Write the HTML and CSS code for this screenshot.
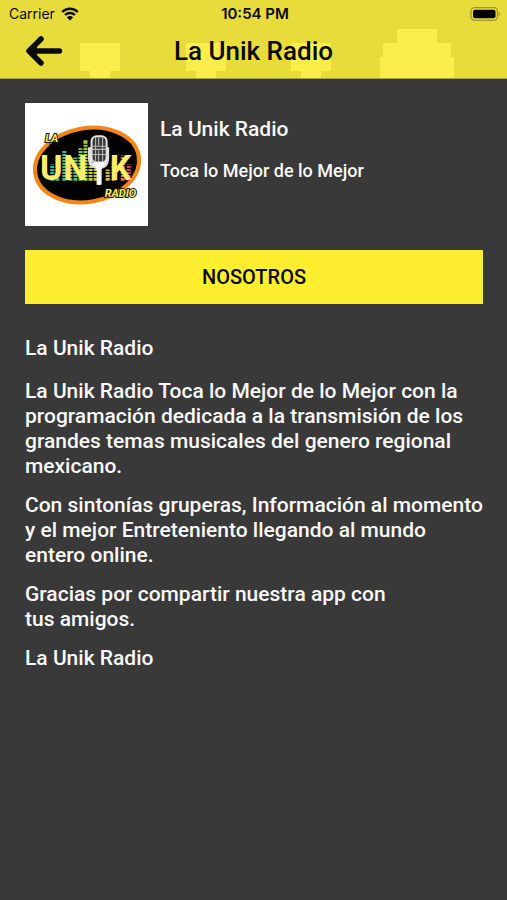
FILE: index.html
```html
<!DOCTYPE html>
<html lang="es">
<head>
  <meta charset="UTF-8">
  <meta name="viewport" content="width=device-width, initial-scale=1.0">
  <title>La Unik Radio</title>
  <link rel="stylesheet" href="styles.css">
</head>
<body>

  <header class="header">
    <!-- Pixel shapes behind the bar -->
    <svg class="header-shapes" width="507" height="79" viewBox="0 0 507 79" fill="#fbed4c" aria-hidden="true">
      <path d="M80 43h40v28H110v8H90v-8H80z"/>
      <path d="M186 43h40v28h-10v8h-20v-8h-10z"/>
      <path d="M291 43h40v28h-10v8h-20v-8h-10z"/>
      <path d="M397 29h40v14h14v14h3v22h-74V57h3V43h14z"/>
    </svg>

    <div class="status-bar">
      <div class="carrier">
        <span>Carrier</span>
        <svg width="18" height="14" viewBox="0 0 18 14" aria-hidden="true">
          <path d="M1.2 5a11 11 0 0 1 15.600 0M4 8a7.200 7.200 0 0 1 10 0" fill="none" stroke="#0c0c04" stroke-width="2.300"/>
          <path d="M9 13.500L5.900 10.400a4.400 4.400 0 0 1 6.200 0z" fill="#0c0c04"/>
        </svg>
      </div>
      <time class="clock">10:54 PM</time>
      <svg class="battery" width="31" height="14" viewBox="0 0 31 14" aria-hidden="true">
        <rect x="1" y="0.700" width="26.500" height="12.600" rx="3.800" fill="none" stroke="#a1982b" stroke-width="1.300"/>
        <rect x="3" y="2.700" width="22.500" height="8.600" rx="2" fill="#000"/>
        <path d="M28.700 4.800q2.600 2.200 0 4.400z" fill="#a1982b"/>
      </svg>
    </div>

    <div class="nav-bar">
      <button class="back-button" aria-label="Volver">
        <svg width="39" height="32" viewBox="0 0 39 32" fill="none" stroke="#0a0a00" stroke-width="5.500" stroke-linecap="round" stroke-linejoin="round">
          <path d="M6 16H35.500M17 4L5 16L17 28"/>
          <path d="M4 16l8-7v14z" fill="#0a0a00" stroke-width="2"/>
        </svg>
      </button>
      <h1>La Unik Radio</h1>
    </div>
  </header>

  <main class="content">
    <section class="station">
      <svg class="logo" width="123" height="123" viewBox="0 0 122 122" role="img" aria-label="La Unik Radio">
        <defs>
          <linearGradient id="bars" x1="0" x2="1">
            <stop offset="0" stop-color="#22b8ac"/>
            <stop offset="0.300" stop-color="#54c060"/>
            <stop offset="0.500" stop-color="#c8d428"/>
            <stop offset="0.800" stop-color="#e2b51c"/>
            <stop offset="1" stop-color="#c92a4e"/>
          </linearGradient>
        </defs>
        <rect width="122" height="122" fill="#fff"/>
        <ellipse cx="61.500" cy="61.500" rx="52" ry="36.500" transform="rotate(-10 61.500 61.500)" fill="#000" stroke="#f58514" stroke-width="4"/>
        <!-- Equalizer -->
        <path d="M25 61h4v16h-4zM30 53h4v24h-4zM37 47h4v30h-4zM43 63h4v14h-4zM48 54h4v23h-4zM53 45h4v32h-4zM58 37h4v40h-4zM63 52h4v25h-4zM68 60h4v17h-4zM80 66h4v11h-4zM86 58h4v19h-4zM95 52h4v25h-4zM101 61h4v16h-4z" fill="url(#bars)"/>
        <path d="M24 41h82M24 44h82M24 47h82M24 50h82M24 53h82M24 56h82M24 59h82M24 62h82M24 65h82M24 68h82M24 71h82M24 74h82" stroke="#000" stroke-width="1"/>
        <text class="logo-main" x="15 38 84" y="76">UNK</text>
        <text class="logo-small" x="20" y="39">LA</text>
        <!-- Microphone -->
        <path d="M64 44v10q0 10 9 10t9-10V44M73 64v17" fill="none" stroke="#ddd" stroke-width="3"/>
        <rect x="66" y="33" width="15" height="26" rx="5" fill="#3b3b3b" stroke="#e6e6e6" stroke-width="2"/>
        <path d="M66 43h15M66 46h15M66 51h15M70 34v24M77 34v24M73 34v8M73 47v11" stroke="#bbb" stroke-width="1"/>
        <path d="M66 59h15l-5 5h-6zM71 64h5v17h-5z" fill="#fff"/>
        <text class="logo-small" x="79" y="93">RADIO</text>
      </svg>
      <div class="station-info">
        <h2>La Unik Radio</h2>
        <p>Toca lo Mejor de lo Mejor</p>
      </div>
    </section>

    <button class="about-button">NOSOTROS</button>

    <article class="about">
      <h3>La Unik Radio</h3>
      <p>La Unik Radio Toca lo Mejor de lo Mejor con la programación dedicada a la transmisión de los grandes temas musicales del genero regional mexicano.</p>
      <p>Con sintonías gruperas, Información al momento y el mejor Entreteniento llegando al mundo entero online.</p>
      <p>Gracias por compartir nuestra app con<br>tus amigos.</p>
      <p>La Unik Radio</p>
    </article>
  </main>

</body>
</html>
```
FILE: styles.css
```css
* {
  box-sizing: border-box;
}

body {
  margin: 0;
  min-height: 100vh;
  background: #393939;
  color: #f8f8f8;
  font-family: Roboto, "Liberation Sans", sans-serif;
  font-weight: 500;
}

h1, h2, h3, p {
  margin: 0;
  font-weight: 500;
}

button {
  border: none;
  padding: 0;
  font: inherit;
  cursor: pointer;
}

/* Header */
.header {
  position: relative;
  height: 79px;
  overflow: hidden;
  background: #e8dc3c;
  border-bottom: 1px solid #aaa136;
  color: #0a0a00;
}

.header-shapes {
  position: absolute;
  top: 0;
  left: 0;
}

.status-bar {
  position: relative;
  display: grid;
  grid-template-columns: 1fr auto 1fr;
  align-items: center;
  height: 27px;
  padding: 0 6px 0 9px;
  font-family: Inter, "Liberation Sans", sans-serif;
  font-size: 14px;
  font-weight: 400;
}

.carrier {
  display: flex;
  align-items: center;
  gap: 6px;
}

.clock {
  font-size: 15px;
  font-weight: 600;
}

.battery {
  justify-self: end;
}

.nav-bar {
  position: relative;
  display: grid;
  grid-template-columns: 1fr auto 1fr;
  align-items: center;
  height: 48px;
  padding: 0 24px;
}

.nav-bar h1 {
  font-size: 26px;
  line-height: 32px;
}

.back-button {
  justify-self: start;
  display: flex;
  background: none;
}

/* Station */
.content {
  padding: 24px 16px 24px 25px;
}

.station {
  display: flex;
  gap: 12px;
}

.logo {
  flex-shrink: 0;
}

.logo-main {
  font-family: Roboto, sans-serif;
  font-size: 34px;
  font-weight: 700;
  fill: #fcee6b;
}

.logo-small {
  font-family: Roboto, sans-serif;
  font-size: 11px;
  font-style: italic;
  font-weight: 700;
  fill: #fcec50;
  stroke: #111;
  stroke-width: 2px;
  paint-order: stroke;
}

.station-info {
  display: flex;
  flex-direction: column;
  gap: 16px;
  padding-top: 14px;
}

.station-info h2 {
  font-size: 21px;
  line-height: 25px;
}

.station-info p {
  font-size: 18px;
  line-height: 25px;
}

.about-button {
  display: block;
  width: calc(100% - 8px);
  height: 54px;
  margin-top: 24px;
  background: #fdee30;
  color: #0a0a00;
  font-size: 20px;
}

/* About text */
.about {
  display: flex;
  flex-direction: column;
  gap: 14px;
  margin-top: 32px;
  font-size: 21px;
  line-height: 25px;
}

.about h3 {
  margin-bottom: 4px;
  font-size: 21px;
}
```
